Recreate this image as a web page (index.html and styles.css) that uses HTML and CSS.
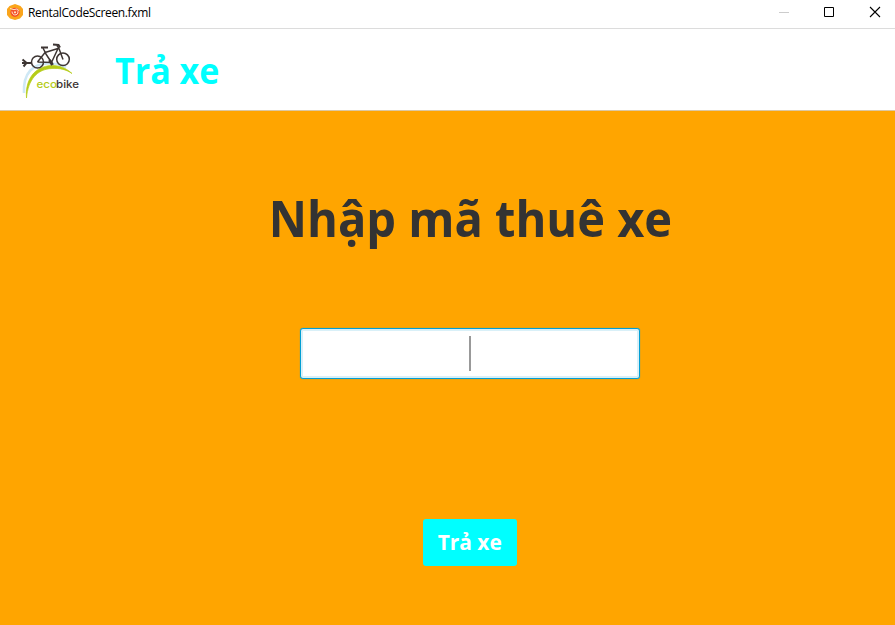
FILE: index.html
```html
<!DOCTYPE html>
<html lang="vi">
<head>
<meta charset="utf-8">
<title>RentalCodeScreen.fxml</title>
<link rel="stylesheet" href="styles.css">
</head>
<body>
<div class="titlebar">
  <svg class="app-icon" width="16" height="16" viewBox="0 0 16 16">
    <path d="M8 0l5.500 2L16 5v6l-3 3.600L8 16l-5-1.400L0 11V5l2.500-3z" fill="#faa51c"/>
    <circle cx="8" cy="8.300" r="4.600" fill="#f4502a"/>
    <path d="M3 4.500l4 1.200 3-.8 2 1.800M5 7.500c0 2.500 2 3.800 4 3.300s2.600-3 1.200-4.300" fill="none" stroke="#ffe2c8" stroke-width="1"/>
    <circle cx="8" cy="8.300" r="1.100" fill="#ffe2c8"/>
  </svg>
  <span class="titlebar-text">RentalCodeScreen.fxml</span>
  <svg class="controls" width="138" height="28" viewBox="0 0 138 28" fill="none">
    <path d="M22 12.500h10" stroke="#ccc"/>
    <path d="M67.500 7.500h9v9h-9z" stroke="#000"/>
    <path d="M113 7l10 10M123 7l-10 10" stroke="#000" stroke-width="1.100"/>
  </svg>
</div>
<header class="header">
  <svg class="logo" width="75" height="70" viewBox="0 0 75 70" fill="none">
    <path d="M9 57C8 37 18 27 34 27.500c7 0 12 1 17 4" stroke="#cfe8f5" stroke-width="2.600"/>
    <path d="M11.500 62C10 43 20 30.500 36 29.500c9 0 15 2.500 21 8-6-4-12-5.500-20-5C22 33 13 44 11.500 62z" fill="#b5cc18" stroke="#b5cc18" stroke-width=".7"/>
    <g stroke="#3d3533" stroke-width="1.500">
      <circle cx="22.500" cy="26" r="6"/>
      <circle cx="48" cy="23.300" r="6.300"/>
      <path d="M22.500 26l7.500-9.500 6.500 10-14-.5M30 16.500l13-4-6.500 14M42 9.500l2 3 4 11M28 12l3 6"/>
      <path d="M26 11.500h7M38 8.500l5.500.5 1.500 2.500" stroke-width="2"/>
      <path d="M34.500 24l3 5" stroke-width="3"/>
      <path d="M7 27h4M7.500 23.500l4 3.300-3 3.700M11 27h6" stroke-width="2"/>
    </g>
    <text class="logo-text" y="51.500"><tspan class="logo-eco" x="21.500" textLength="20.500" lengthAdjust="spacingAndGlyphs">eco</tspan><tspan class="logo-bike" x="41" textLength="23" lengthAdjust="spacingAndGlyphs">bike</tspan></text>
  </svg>
  <h1 class="header-title">Trả xe</h1>
</header>
<main class="content">
  <h2 class="prompt">Nhập mã thuê xe</h2>
  <div class="code-field" role="textbox"><span class="caret"></span></div>
  <button class="submit"><span class="submit-label">Trả xe</span></button>
</main>
</body>
</html>
```
FILE: styles.css
```css
* { box-sizing: border-box; }
body {
  margin: 0;
  width: 895px;
  height: 625px;
  display: flex;
  flex-direction: column;
  overflow: hidden;
  background: #fff;
  font-family: "Open Sans", "Noto Sans", sans-serif;
}
.titlebar {
  display: flex;
  align-items: flex-start;
  height: 29px;
  padding-left: 7px;
  border-bottom: 1px solid #dcdcdc;
}
.app-icon { margin-top: 4px; }
.titlebar-text {
  margin-left: 5px;
  font-size: 12px;
  line-height: 26px;
  letter-spacing: -0.35px;
  color: #000;
}
.controls { margin-left: auto; }
.header {
  display: flex;
  height: 81px;
  padding: 7px 0 0 15px;
}
.logo-text {
  font-family: Inter, "Open Sans", sans-serif;
  font-size: 11px;
  font-weight: 500;
}
.logo-eco { fill: #b5cc18; }
.logo-bike { fill: #3d3533; }
.header-title {
  margin: 10px 0 0 25px;
  font-size: 36px;
  line-height: 50px;
  font-weight: 700;
  transform: scaleX(0.945);
  transform-origin: left;
  color: #0ff;
}
.content {
  flex: 1;
  display: flex;
  flex-direction: column;
  align-items: center;
  padding-left: 45px;
  background: #ffa500;
  border-top: 1px solid #dbc8a4;
}
.prompt {
  margin: 72px 0 0;
  padding-left: 1px;
  font-size: 50px;
  line-height: 70px;
  font-weight: 700;
  white-space: nowrap;
  transform: scaleX(0.94);
  color: #333;
}
.code-field {
  display: flex;
  justify-content: center;
  align-items: center;
  width: 340px;
  height: 51px;
  margin-top: 75px;
  border: 1px solid #039ed3;
  border-radius: 3px;
  background: #fff;
  box-shadow: inset 0 0 0 2px #d9f0f8, 0 0 1px #039ed3;
}
.caret {
  width: 2px;
  height: 35px;
  background: #999;
}
.submit {
  width: 94px;
  height: 47px;
  margin-top: 140px;
  padding: 0 0 2px;
  border: 0;
  border-radius: 3px;
  background: #0ff;
  color: #fff;
  font: 700 22px/45px "Open Sans", "Noto Sans", sans-serif;
}
.submit-label {
  display: inline-block;
  transform: scaleX(0.95);
}
```
